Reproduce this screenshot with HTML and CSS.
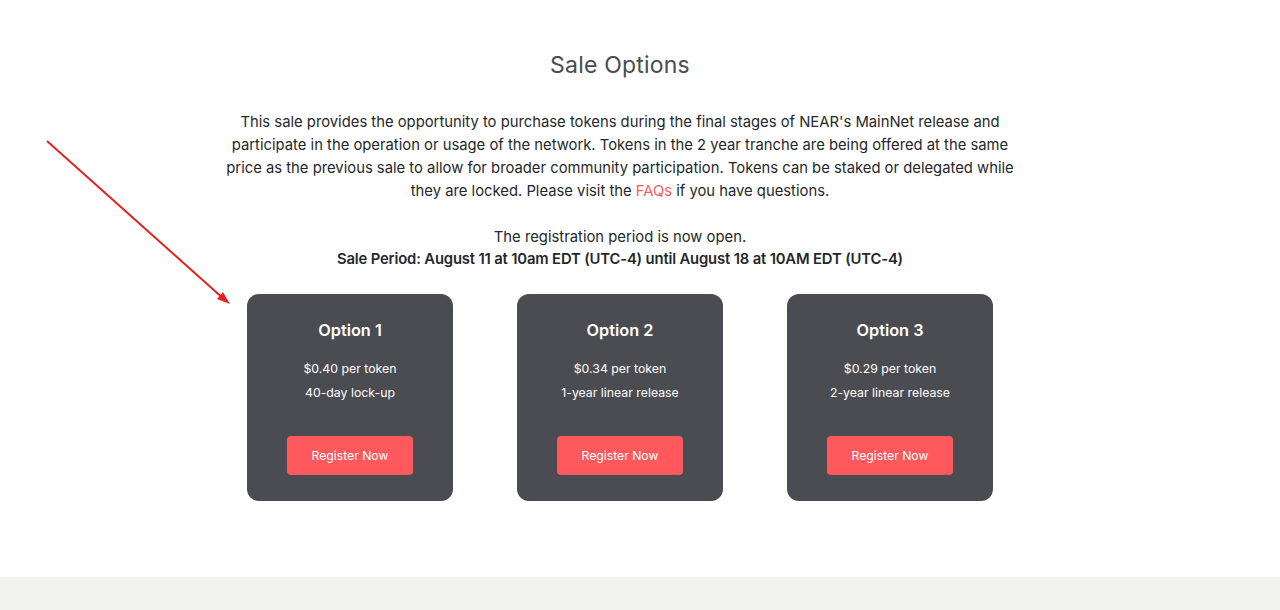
FILE: index.html
```html
<!DOCTYPE html>
<html lang="en">
<head>
<meta charset="utf-8">
<title>Sale Options</title>
<link rel="stylesheet" href="styles.css">
</head>
<body>
<main class="page">
  <section class="sale">
    <h2 class="sale-title">Sale Options</h2>
    <p class="sale-intro">This sale provides the opportunity to purchase tokens during the final stages of NEAR's MainNet release and participate in the operation or usage of the network. Tokens in the 2 year tranche are being offered at the same price as the previous sale to allow for broader community participation. Tokens can be staked or delegated while they are locked. Please visit the <a href="#" class="link">FAQs</a> if you have questions.</p>
    <p class="sale-period">The registration period is now open.<br><strong>Sale Period: August 11 at 10am EDT (UTC-4) until August 18 at 10AM EDT (UTC-4)</strong></p>
    <div class="options">
      <div class="card">
        <h3 class="card-title">Option 1</h3>
        <p class="card-line">$0.40 per token</p>
        <p class="card-line">40-day lock-up</p>
        <a href="#" class="btn">Register Now</a>
      </div>
      <div class="card">
        <h3 class="card-title">Option 2</h3>
        <p class="card-line">$0.34 per token</p>
        <p class="card-line">1-year linear release</p>
        <a href="#" class="btn">Register Now</a>
      </div>
      <div class="card">
        <h3 class="card-title">Option 3</h3>
        <p class="card-line">$0.29 per token</p>
        <p class="card-line">2-year linear release</p>
        <a href="#" class="btn">Register Now</a>
      </div>
    </div>
  </section>
  <footer class="footer"></footer>
  <svg class="arrow" width="200" height="180" viewBox="0 0 200 180">
    <line x1="2" y1="2" x2="180" y2="161" stroke="#e3221f" stroke-width="2"/>
    <path d="M185 165 L172 160 L178 153 Z" fill="#e3221f"/>
  </svg>
</main>
</body>
</html>
```
FILE: styles.css
```css
* { box-sizing: border-box; }
html, body { margin: 0; padding: 0; background: #fff; }
body {
  font-family: Inter, "Open Sans", sans-serif;
  color: #25282a;
}
.page {
  position: relative;
  min-height: 610px;
}
.sale {
  width: 1240px;
  display: flex;
  flex-direction: column;
  align-items: center;
  padding-top: 50px;
  height: 577px;
}
.sale-title {
  margin: 0;
  font-size: 23px;
  font-weight: 400;
  color: #4a4c51;
  line-height: 30px;
  letter-spacing: 0.2px;
}
.sale-intro {
  width: 800px;
  margin: 31px 0 0;
  text-align: center;
  font-size: 14.8px;
  line-height: 23px;
}
.link { color: #ff585d; text-decoration: none; }
.sale-period {
  margin: 23px 0 0;
  text-align: center;
  font-size: 14.8px;
  line-height: 22px;
}
.sale-period strong { font-weight: 600; letter-spacing: -0.15px; }
.options {
  display: flex;
  gap: 64px;
  margin-top: 24px;
}
.card {
  width: 206px;
  height: 207px;
  background: #4a4c51;
  border-radius: 12px;
  display: flex;
  flex-direction: column;
  align-items: center;
  padding-top: 25px;
  color: #fff;
}
.card-title {
  margin: 0 0 16px;
  font-size: 16.3px;
  font-weight: 600;
  line-height: 22px;
}
.card-line {
  margin: 0;
  font-size: 12.3px;
  line-height: 24px;
}
.btn {
  margin-top: 31px;
  width: 126px;
  height: 39px;
  background: #ff585d;
  border-radius: 4px;
  color: #fff;
  text-decoration: none;
  font-size: 12.2px;
  display: flex;
  align-items: center;
  justify-content: center;
}
.footer {
  height: 33px;
  background: #f2f2ee;
}
.arrow {
  position: absolute;
  left: 45px;
  top: 139px;
}
```
